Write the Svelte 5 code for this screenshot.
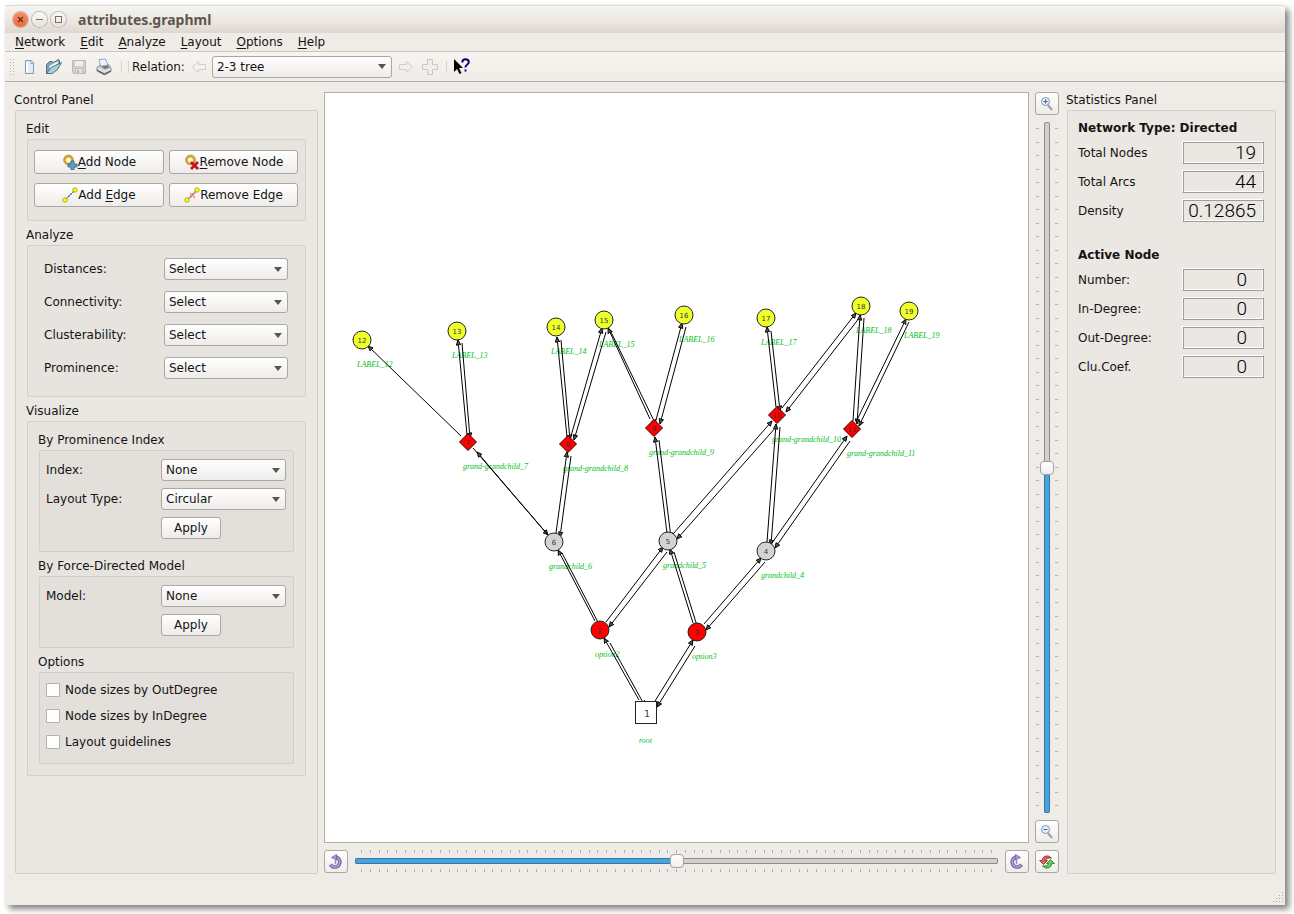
<script>
  const menus = ['Network', 'Edit', 'Analyze', 'Layout', 'Options', 'Help'];
  const analyses = ['Distances', 'Connectivity', 'Clusterability', 'Prominence'];
  const options = ['Node sizes by OutDegree', 'Node sizes by InDegree', 'Layout guidelines'];

  const networkStats = [
    ['Total Nodes', '19'],
    ['Total Arcs', '44'],
    ['Density', '0.12865']
  ];
  const nodeStats = ['Number:', 'In-Degree:', 'Out-Degree:', 'Clu.Coef.'];

  const nodes = [
    { id: 1, x: 646, y: 712, shape: 'box', label: 'root' },
    { id: 2, x: 600, y: 630, shape: 'circle', fill: '#ff0000', label: 'option2' },
    { id: 3, x: 697, y: 632, shape: 'circle', fill: '#ff0000', label: 'option3' },
    { id: 4, x: 766, y: 551, shape: 'circle', fill: '#d3d3d3', label: 'grandchild_4' },
    { id: 5, x: 668, y: 541, shape: 'circle', fill: '#d3d3d3', label: 'grandchild_5' },
    { id: 6, x: 554, y: 542, shape: 'circle', fill: '#d3d3d3', label: 'grandchild_6' },
    { id: 7, x: 468, y: 442, shape: 'diamond', fill: '#ff0000', label: 'grand-grandchild_7' },
    { id: 8, x: 568, y: 444, shape: 'diamond', fill: '#ff0000', label: 'grand-grandchild_8' },
    { id: 9, x: 654, y: 428, shape: 'diamond', fill: '#ff0000', label: 'grand-grandchild_9' },
    { id: 10, x: 777, y: 415, shape: 'diamond', fill: '#ff0000', label: 'grand-grandchild_10' },
    { id: 11, x: 852, y: 429, shape: 'diamond', fill: '#ff0000', label: 'grand-grandchild_11' },
    { id: 12, x: 362, y: 340, shape: 'circle', fill: '#eeff2a', label: 'LABEL_12' },
    { id: 13, x: 457, y: 331, shape: 'circle', fill: '#eeff2a', label: 'LABEL_13' },
    { id: 14, x: 556, y: 327, shape: 'circle', fill: '#eeff2a', label: 'LABEL_14' },
    { id: 15, x: 604, y: 320, shape: 'circle', fill: '#eeff2a', label: 'LABEL_15' },
    { id: 16, x: 684, y: 315, shape: 'circle', fill: '#eeff2a', label: 'LABEL_16' },
    { id: 17, x: 766, y: 318, shape: 'circle', fill: '#eeff2a', label: 'LABEL_17' },
    { id: 18, x: 861, y: 306, shape: 'circle', fill: '#eeff2a', label: 'LABEL_18' },
    { id: 19, x: 909, y: 311, shape: 'circle', fill: '#eeff2a', label: 'LABEL_19' }
  ];

  // Each arc runs from its first point to its second, where the arrow head is.
  const arcs = [
    [461, 436, 368, 346], [467, 435, 458, 340], [462, 343, 470, 438],
    [567, 437, 557, 337], [561, 340, 570, 440], [571, 436, 602, 328],
    [606, 332, 574, 440], [650, 419, 608, 328], [611, 332, 656, 425],
    [656, 420, 682, 323], [686, 327, 660, 424], [776, 407, 767, 327],
    [771, 331, 780, 411], [782, 408, 856, 313], [860, 317, 786, 412],
    [853, 421, 860, 315], [864, 318, 857, 424], [856, 422, 906, 319],
    [909, 322, 859, 426], [473, 448, 548, 535], [548, 535, 477, 452],
    [556, 533, 567, 452], [571, 456, 560, 537], [595, 621, 558, 550],
    [562, 553, 601, 628], [606, 622, 663, 547], [667, 552, 609, 627],
    [693, 623, 670, 549], [674, 552, 698, 629], [667, 533, 655, 437],
    [659, 440, 671, 538], [673, 534, 772, 421], [777, 426, 677, 539],
    [767, 542, 776, 424], [780, 427, 771, 545], [772, 543, 847, 436],
    [850, 441, 775, 548], [704, 624, 761, 558], [765, 562, 706, 630],
    [639, 700, 604, 638], [610, 643, 645, 706], [655, 701, 693, 640],
    [695, 646, 657, 707]
  ];

  let zoom = $state(125);
  let rotation = $state(0);
  let relation = $state('2-3 tree');
</script>

{#snippet combo(id, value)}
  <span class="combo">
    <select {id}><option>{value}</option></select>
  </span>
{/snippet}

{#snippet nodeGlyph()}
  <circle cx="6.500" cy="6" r="3.800" fill="#fff6cf" stroke="#d5a633" stroke-width="2.400" />
  <circle cx="6.500" cy="6" r="5" fill="none" stroke="#a07c30" stroke-width=".5" />
{/snippet}

{#snippet edgeGlyph()}
  <path d="M4 12L13 3" stroke="#444" stroke-width="1.2" stroke-dasharray="2 1" />
  <rect x="1" y="11" width="4" height="4" rx="1.4" fill="#ff0" stroke="#b5a900" />
  <rect x="11" y="1" width="4" height="4" rx="1.4" fill="#ff0" stroke="#b5a900" />
{/snippet}

{#snippet turnGlyph()}
  <path d="M7 3a5 5 0 1 1-4.500 7.500" fill="none" stroke="#6f5ba0" stroke-width="3.600" />
  <path d="M7 3a5 5 0 1 1-4.500 7.500" fill="none" stroke="#b3a6d6" stroke-width="1.600" />
  <path d="M8.500.5v5.500L3.500 3.500z" fill="#a596d0" stroke="#6f5ba0" stroke-width=".7" />
  <path d="M7.500 6v4" stroke="#9a8ac6" stroke-width="1.500" />
{/snippet}

<div class="page">
  <div class="window">
    <header class="titlebar">
      <button class="wm close" aria-label="Close"><svg width="15" height="15"><path d="M5 5l5 5M10 5l-5 5" stroke="#6d2a13" stroke-width="1.3" /></svg></button>
      <button class="wm" aria-label="Minimize"><svg width="15" height="15"><path d="M4 7.5h7" stroke="#77716a" /></svg></button>
      <button class="wm" aria-label="Maximize"><svg width="15" height="15"><rect x="4.5" y="4.5" width="6" height="6" fill="none" stroke="#77716a" /></svg></button>
      <h1>attributes.graphml</h1>
    </header>

    <nav class="menubar">
      {#each menus as menu}
        <button><u>{menu[0]}</u>{menu.slice(1)}</button>
      {/each}
    </nav>

    <div class="toolbar">
      <svg class="grip" width="6" height="18"><path d="M1.5 1v17M4.5 1v17" stroke="#b9b5b0" stroke-dasharray="1 2" /></svg>
      <button aria-label="New"><svg width="16" height="18" viewBox="0 0 16 18">
        <path d="M4.5 2.500h6l2 2v11h-8z" fill="#e3edfa" stroke="#8798b4" /><path d="M10 3v2.500h2.500" fill="#fff" stroke="#7388a8" stroke-width=".8" /><path d="M6 4v10" stroke="#fff" stroke-width="2" /></svg></button>
      <button aria-label="Open"><svg width="18" height="18" viewBox="0 0 18 18">
        <path d="M1.500 15.500V6.500l3-3h3l1 1 5-3 1 1v3l-8 9z" fill="#7fa3b3" stroke="#51707e" /><path d="M4 8l9-5v3l-8 6z" fill="#fff" stroke="#9fb0b8" stroke-width=".6" /><path d="M1.500 15.500L6 9.500 16.500 4.500l-4 7-5 4z" fill="#a8cfde" stroke="#4c7181" /></svg></button>
      <button aria-label="Save"><svg width="16" height="18" viewBox="0 0 16 18">
        <path d="M1.500 2.500h13v13h-12l-1-1z" fill="#d2d0cd" stroke="#b9b7b4" /><path d="M4 3h8v5H4z" fill="#efeeec" /><path d="M4.500 10.500h7v5h-7z" fill="#e6e4e2" stroke="#c0bebb" /><path d="M6 12h2v3H6z" fill="#b9b7b4" /></svg></button>
      <button aria-label="Print"><svg width="18" height="18" viewBox="0 0 18 18">
        <path d="M2 9.500l4-3h7.500l2.500 4v3l-6.500 3.500L2 13z" fill="#cfcfcf" stroke="#6b6b6b" stroke-width=".8" /><path d="M5.500 8L4 1.500l6.500-.5 2.500 6.500z" fill="#eef4ff" stroke="#7995c4" stroke-width=".8" /><path d="M2.500 10l7 3.500 6-2.500" fill="none" stroke="#f4f4f4" /><path d="M2.500 12.500l7 3.500 6-3" fill="none" stroke="#4d4d4d" /><path d="M6 8.500l6.500-1 2 2.500-5 1z" fill="#777" /></svg></button>
      <i class="rule"></i><i class="rule"></i>
      <label for="relation">Relation:</label>
      <button class="prev" aria-label="Previous relation"><svg width="14" height="12"><path d="M.5 6l6-5.500V3.500h7v5h-7v3z" fill="#f4f3f1" stroke="#cfcdca" /></svg></button>
      <span class="combo wide"><select id="relation" bind:value={relation}><option>2-3 tree</option></select></span>
      <button class="next" aria-label="Next relation"><svg width="14" height="12"><path d="M13.500 6l-6-5.500V3.500h-7v5h7v3z" fill="#f0efed" stroke="#cfcdca" /></svg></button>
      <button class="plus" aria-label="Add relation"><svg width="16" height="16"><path d="M5.500.5h5v5h5v5h-5v5h-5v-5h-5v-5h5z" fill="#f0efed" stroke="#c9c7c4" /></svg></button>
      <i class="rule"></i>
      <button class="what" aria-label="What's this?"><svg width="18" height="18" viewBox="0 0 18 18">
        <path d="M1 1v13l3-3 2.500 5 2-1L6 10h4z" fill="#000" /><path d="M9.300 4.500Q9.300 1.200 12.500 1.200T15.800 4Q15.800 5.500 14 6.700T12.500 9.500M12.500 11.500v2" fill="none" stroke="#00007f" stroke-width="1.900" /></svg></button>
    </div>

    <main>
      <section class="group side">
        <h2>Control Panel</h2>
        <div class="frame stack">
          <section class="group">
            <h2>Edit</h2>
            <div class="frame edits">
              <button class="push"><svg width="16" height="16">{@render nodeGlyph()}<path d="M9 7h3v3h3v3h-3v3H9v-3H6v-3h3z" fill="#5fa0c8" stroke="#2f6587" stroke-width=".8" /></svg><span><u>A</u>dd Node</span></button>
              <button class="push"><svg width="16" height="16">{@render nodeGlyph()}<path d="M7 8l7 7M14 8l-7 7" stroke="#c3131c" stroke-width="2.800" /></svg><span><u>R</u>emove Node</span></button>
              <button class="push"><svg width="16" height="16">{@render edgeGlyph()}</svg><span>Add <u>E</u>dge</span></button>
              <button class="push"><svg width="16" height="16">{@render edgeGlyph()}<path d="M6 6l5 5M11 6l-5 5" stroke="#f08a84" stroke-width="1.200" /></svg><span>Remove Edge</span></button>
            </div>
          </section>

          <section class="group">
            <h2>Analyze</h2>
            <div class="frame analyze">
              {#each analyses as name}
                <label for={name}>{name}:</label>
                {@render combo(name, 'Select')}
              {/each}
            </div>
          </section>

          <section class="group">
            <h2>Visualize</h2>
            <div class="frame stack">
              <section class="group">
                <h2>By Prominence Index</h2>
                <div class="frame form tall">
                  <label for="index">Index:</label>
                  {@render combo('index', 'None')}
                  <label for="layout">Layout Type:</label>
                  {@render combo('layout', 'Circular')}
                  <button class="push apply">Apply</button>
                </div>
              </section>
              <section class="group">
                <h2>By Force-Directed Model</h2>
                <div class="frame form">
                  <label for="model">Model:</label>
                  {@render combo('model', 'None')}
                  <button class="push apply">Apply</button>
                </div>
              </section>
              <section class="group">
                <h2>Options</h2>
                <div class="frame checks">
                  {#each options as option}
                    <label><input type="checkbox" />{option}</label>
                  {/each}
                </div>
              </section>
            </div>
          </section>
        </div>
      </section>

      <div class="scene">
        <div class="canvas">
          <svg viewBox="325 93 703 749" role="img" aria-label="Network graph">
            <defs>
              <marker id="head" viewBox="0 0 6 6" refX="5.500" refY="3" markerWidth="6" markerHeight="6" orient="auto">
                <path d="M.5 .8L5.500 3 .5 5.200z" fill="#555" stroke="#000" stroke-width=".9" />
              </marker>
            </defs>
            {#each nodes as n}
              <text class="name" x={n.shape === 'box' ? n.x - 7 : n.x - 5} y={n.shape === 'box' ? n.y + 31 : n.y + 27}>{n.label}</text>
            {/each}
            {#each arcs as [x1, y1, x2, y2]}
              <line {x1} {y1} {x2} {y2} stroke="#000" marker-end="url(#head)" />
            {/each}
            {#each nodes as n}
              {#if n.shape === 'box'}
                <rect x={n.x - 10.5} y={n.y - 10.5} width="21" height="22" fill="#fff" stroke="#222" />
                <text class="id root" x={n.x + 1} y={n.y + 5}>{n.id}</text>
              {:else}
                {#if n.shape === 'circle'}
                  <circle cx={n.x} cy={n.y} r="9" fill={n.fill} stroke="#222" />
                {:else}
                  <path d="M{n.x} {n.y - 8.5}l8.500 8.500-8.500 8.500-8.500-8.500z" fill={n.fill} stroke="#300" />
                {/if}
                <text class="id" x={n.x} y={n.y + 3}>{n.id}</text>
              {/if}
            {/each}
          </svg>
        </div>

        <div class="zoomer">
          <button class="tool" aria-label="Zoom in"><svg width="16" height="16"><circle cx="6.500" cy="5.500" r="4" fill="#e4eefb" stroke="#8295ad" /><path d="M6.500 3.500v4M4.500 5.500h4" stroke="#3a66a8" /><path d="M9 9l4 5" stroke="#a5a5a0" stroke-width="2.200" /></svg></button>
          <div class="slider vertical">
            <div class="ticks">{#each { length: 51 } as _}<i></i>{/each}</div>
            <input type="range" min="0" max="250" bind:value={zoom} aria-label="Zoom" style="--fill: {zoom / 2.5}%" />
            <div class="ticks">{#each { length: 51 } as _}<i></i>{/each}</div>
          </div>
          <button class="tool" aria-label="Zoom out"><svg width="16" height="16"><circle cx="6.500" cy="5.500" r="4" fill="#e4eefb" stroke="#8295ad" /><path d="M4.500 5.500h4" stroke="#3a66a8" /><path d="M9 9l4 5" stroke="#a5a5a0" stroke-width="2.200" /></svg></button>
        </div>

        <div class="rotator">
          <button class="tool" aria-label="Rotate left"><svg width="16" height="16">{@render turnGlyph()}</svg></button>
          <div class="slider">
            <div class="ticks">{#each { length: 73 } as _}<i></i>{/each}</div>
            <input type="range" min="-180" max="180" bind:value={rotation} aria-label="Rotation" style="--fill: {(rotation + 180) / 3.6}%" />
            <div class="ticks">{#each { length: 73 } as _}<i></i>{/each}</div>
          </div>
          <button class="tool" aria-label="Rotate right"><svg width="16" height="16"><g transform="matrix(-1 0 0 1 15 0)">{@render turnGlyph()}</g></svg></button>
        </div>

        <button class="tool" aria-label="Reset"><svg width="16" height="16"><path d="M12.500 4Q9.500.8 6 2.200 3.300 3.500 3.200 6.500H.6L4.500 10.500l4-4H6.200Q7 3.800 12.500 4z" fill="#e0606a" stroke="#9b2028" stroke-width=".8" /><path d="M3.500 12Q6.500 15.200 10 13.800q2.700-1.500 2.800-4.300h2.600L11.500 5.500l-4 4h2.300Q9 12.200 3.500 12z" fill="#5fd058" stroke="#1f7f24" stroke-width=".8" /></svg></button>
      </div>

      <section class="group side">
        <h2>Statistics Panel</h2>
        <div class="frame stats">
          <h3>Network Type: Directed</h3>
          {#each networkStats as [name, value]}
            <div class="stat"><span>{name}</span><output>{value}</output></div>
          {/each}
          <h3 class="active">Active Node</h3>
          {#each nodeStats as name}
            <div class="stat"><span>{name}</span><output class="blank">0</output></div>
          {/each}
        </div>
      </section>
    </main>
    <footer><svg width="12" height="12"><path d="M1 10.500h11M4 7.500h8M7 4.500h5M10 1.500h2" stroke="#aaa6a1" stroke-dasharray="1 2" /></svg></footer>
  </div>
</div>

<style>
  :global(body) { margin: 0; background: #fff; }
  * { box-sizing: border-box; }
  .page { padding: 5px 9px 9px 5px; font: 12px/14px "DejaVu Sans", sans-serif; color: #141414; }
  .window {
    display: flex; flex-direction: column; min-height: calc(100vh - 14px);
    background: #efebe7; border-radius: 3px 3px 0 0; box-shadow: 4px 4px 6px rgba(0, 0, 0, .5);
  }
  button, select, input { font: inherit; color: inherit; margin: 0; }
  button { padding: 0; border: 0; background: none; }
  svg { display: block; flex: none; }
  h1, h2, h3 { margin: 0; font-size: 12px; font-weight: normal; }
  u { text-underline-offset: 2px; text-decoration-thickness: 1px; }

  .titlebar {
    display: flex; align-items: center; gap: 4px; height: 28px; padding-left: 8px;
    border-radius: 3px 3px 0 0; border-top: 1px solid #dcd9d5;
    background: linear-gradient(#f6f5f2, #e9e4df 65%, #dfd6cf);
  }
  .titlebar h1 { margin-left: 8px; font: bold 14px/20px "Noto Sans", sans-serif; color: #5c554d; }
  .wm { width: 15px; height: 15px; border-radius: 50%; background: linear-gradient(#faf9f7, #e6e1dc); box-shadow: 0 0 0 1px #bdb7b0; }
  .close { background: linear-gradient(#f4926c, #ea6a3e); box-shadow: 0 0 0 1px #d5b3a4; }

  .menubar { display: flex; gap: 15px; height: 19px; padding: 1px 10px 0; border-bottom: 1px solid #cbc7c3; }
  .menubar button { height: 16px; }

  .toolbar {
    display: flex; align-items: center; height: 30px; padding-left: 4px;
    background: linear-gradient(#f8f5f1, #efebe7); border-bottom: 1px solid #b3afaa;
  }
  .toolbar > button { margin-left: 8px; }
  .toolbar > .grip + button { margin-left: 6px; }
  .rule { width: 1px; height: 12px; margin-left: 8px; background: #d6d3cf; }
  .rule + .rule { margin-left: 6px; }
  .toolbar label { margin-left: 3px; }
  .toolbar .prev { margin: 0 6px 0 7px; }
  .toolbar .next { margin-left: 7px; }
  .toolbar .plus { margin: 0 0 0 9px; }
  .toolbar .what { margin-left: 6px; }

  .combo { display: grid; align-items: center; }
  .combo > select, .combo::after { grid-area: 1 / 1; }
  .combo::after {
    content: ""; justify-self: end; margin-right: 6px; pointer-events: none;
    border: 4px solid transparent; border-top: 5px solid #555; border-bottom: 0;
  }
  .combo.wide { width: 180px; }
  select {
    appearance: none; width: 100%; height: 22px; padding: 0 18px 0 4px;
    border: 1px solid #aaa7a4; border-radius: 3px; background: linear-gradient(#fff, #eeecea);
  }
  .push {
    display: flex; align-items: center; justify-content: center; height: 24px;
    border: 1px solid #aaa7a4; border-radius: 3px; background: linear-gradient(#fff, #eeecea);
  }
  .apply { width: 60px; height: 22px; grid-column: 2; }

  main {
    flex: 1; display: grid; grid-template-columns: 304px minmax(0, 1fr) 211px; gap: 6px;
    padding: 10px 9px 17px;
  }
  .group { display: flex; flex-direction: column; min-width: 0; }
  .group > h2 { padding-top: 1px; margin-bottom: 3px; }
  .group > .frame { margin-left: 1px; border: 1px solid #d2cfca; border-radius: 2px; background: rgba(60, 50, 30, .02); }
  .side > .frame { flex: 1; }
  .side:last-child > h2 { margin-left: 1px; }
  .side:last-child > .frame { margin-left: 2px; }
  .stack { display: flex; flex-direction: column; gap: 6px; padding: 10px 11px 11px 10px; }
  .edits { display: grid; grid-template-columns: 130px minmax(0, 1fr); gap: 9px 5px; padding: 10px 7px 13px 6px; }
  .analyze { display: grid; grid-template-columns: minmax(0, 1fr) 124px; align-items: center; gap: 11px; padding: 12px 17px 17px 16px; }
  .form { display: grid; grid-template-columns: 115px minmax(0, 1fr); align-items: center; row-gap: 7px; padding: 8px 7px 11px 6px; }
  .tall { padding-bottom: 12px; }
  .checks { display: flex; flex-direction: column; gap: 12px; padding: 10px 6px 14px; }
  .checks label { display: flex; align-items: center; gap: 5px; }
  .checks input { appearance: none; width: 14px; height: 14px; border: 1px solid #b5b2ae; border-radius: 1px; background: #fff; }

  .scene { display: grid; grid-template: minmax(0, 1fr) 24px / minmax(0, 1fr) 24px; gap: 7px 6px; }
  .canvas { border: 1px solid #b3b0ac; background: #fff; }
  .canvas svg { width: 100%; height: 100%; }
  .name { font: italic 8px "Liberation Serif", serif; fill: #00c020; }
  .id { font: 7px "DejaVu Sans", sans-serif; text-anchor: middle; fill: #333; }
  .id.root { font-size: 9px; }

  .tool {
    display: grid; place-items: center; width: 24px; height: 23px;
    border: 1px solid #aaa7a4; border-radius: 3px; background: linear-gradient(#fff, #eeecea);
  }
  .zoomer { display: flex; flex-direction: column; gap: 7px; }
  .rotator { display: flex; align-items: flex-start; gap: 7px; }
  .slider { flex: 1; display: grid; grid-template-rows: 3px 14px 3px; gap: 1px; min-width: 0; min-height: 0; }
  .ticks { display: flex; justify-content: space-between; align-items: stretch; padding: 0 6px; }
  .ticks i { width: 1px; background: #b3b0ac; }
  .vertical { grid-template: minmax(0, 1fr) / 3px 14px 3px; justify-content: center; }
  .vertical .ticks { flex-direction: column; padding: 6px 0; }
  .vertical .ticks i { width: 3px; height: 1px; }

  input[type="range"] { appearance: none; width: 100%; height: 14px; background: none; }
  input[type="range"]::-webkit-slider-runnable-track {
    height: 6px; border-radius: 2px; box-shadow: inset 0 0 0 1px rgba(60, 60, 60, .45);
    background: linear-gradient(to right, #43a5e2 var(--fill), #d3d0cc var(--fill));
  }
  input[type="range"]::-webkit-slider-thumb {
    appearance: none; width: 14px; height: 14px; margin-top: -4px;
    border: 1px solid #a5a29f; border-radius: 4px; background: linear-gradient(#fff, #f1efed);
  }
  .vertical input[type="range"] { writing-mode: vertical-lr; direction: rtl; width: 14px; height: 100%; }
  .vertical input[type="range"]::-webkit-slider-runnable-track {
    width: 6px; height: 100%; background: linear-gradient(to top, #43a5e2 var(--fill), #d3d0cc var(--fill));
  }
  .vertical input[type="range"]::-webkit-slider-thumb { margin: 0 0 0 -4px; }

  .stats { display: flex; flex-direction: column; gap: 6px; padding: 10px 11px 11px 10px; }
  .stats h3 { font-weight: bold; }
  .stats .active { margin-top: 20px; }
  .stat { display: flex; align-items: center; justify-content: space-between; }
  output {
    width: 82px; height: 23px; padding-right: 7px; text-align: right;
    font: 300 19px/21px Roboto, sans-serif; color: #000;
    border: 1px solid; border-color: #fff #9f9c99 #9f9c99 #fff;
    box-shadow: inset 1px 1px #9f9c99, inset -1px -1px #fff;
  }
  output.blank { padding-right: 16px; }

  footer { display: flex; justify-content: flex-end; height: 14px; padding-right: 1px; }
</style>
